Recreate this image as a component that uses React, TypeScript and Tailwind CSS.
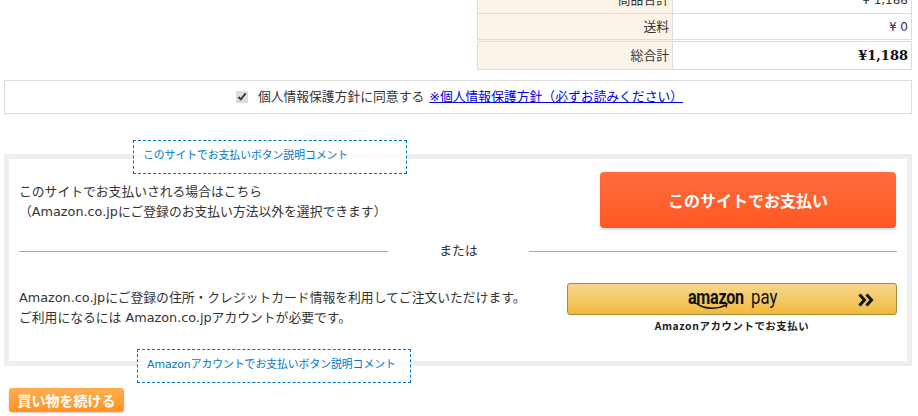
const jp = "font-['DejaVu_Sans','Noto_Sans_CJK_JP',sans-serif]";
const cell = "border border-[#dddddd]";
const price = "font-['DejaVu_Sans',sans-serif] text-[12px] pr-[3px] text-right";

function AmazonPayLogo() {
  return (
    <span className="relative -mt-[3px] flex items-baseline font-['Roboto',sans-serif] text-[21px] leading-none text-[#111]">
      <span className="w-[57px] origin-left scale-x-[0.77] font-bold tracking-[-0.4px]">amazon</span>
      <span className="ml-[6px] w-[26px] origin-left scale-x-[0.8] font-normal">pay</span>
      <svg className="absolute left-[8px] top-[15px]" width="33" height="9" viewBox="0 0 40 10" fill="none">
        <path d="M1 1.5C9 7.5 24 9.5 36 3.5" stroke="#111" strokeWidth="2" strokeLinecap="round" />
        <path d="M32 1.5L37.5 1.5L36.5 6.5" stroke="#111" strokeWidth="1.6" />
      </svg>
    </span>
  );
}

function Comment({ children, className }: { children: React.ReactNode; className: string }) {
  return (
    <div className={`absolute h-[34px] w-[274px] border border-dashed border-[#0073bd] bg-white/75 flex items-center pb-[1px] pl-[9px] text-[10.8px] whitespace-nowrap text-[#0078c8] ${className}`}>
      {children}
    </div>
  );
}

export default function App() {
  return (
    <div className={`relative h-[416px] w-[918px] overflow-hidden bg-white text-[12.8px] text-[#333] ${jp}`}>
      <div className="flex justify-end pr-[6px]">
        <table className="-mt-[14px] w-[435px] border-collapse text-[12.8px]">
          <tbody>
            <tr className="h-[27px]">
              <th className={`w-[195px] ${cell} bg-[#fdf4e9] pr-[3px] text-right font-normal`}>商品合計</th>
              <td className={`${cell} ${price}`}>¥ 1,188</td>
            </tr>
            <tr className="h-[27px]">
              <th className={`${cell} bg-[#fdf4e9] pr-[3px] text-right font-normal`}>送料</th>
              <td className={`${cell} ${price}`}>¥ 0</td>
            </tr>
            <tr className="h-[29px]">
              <th className={`${cell} border-t-[3px] border-t-[#dddddd] border-double bg-[#fdf4e9] pr-[3px] text-right font-normal`}>総合計</th>
              <td className={`${cell} border-t-[3px] border-t-[#dddddd] border-double pr-[3px] text-right text-[13px] font-bold font-['DejaVu_Serif',serif] text-[#111]`}>¥1,188</td>
            </tr>
          </tbody>
        </table>
      </div>

      <div className="ml-[4px] mt-[10px] flex h-[34px] w-[908px] items-center justify-center border border-[#dddddd] pl-[3px]">
        <input type="checkbox" defaultChecked className="mr-[10px] h-[12px] w-[12px] accent-[#dcdcdc]" />
        <span>個人情報保護方針に同意する</span>
        <a href="#" className="ml-[5px] text-[#0000ee] underline">※個人情報保護方針（必ずお読みください）</a>
      </div>

      <div className="ml-[4px] mt-[40px] h-[212px] w-[908px] border-[5px] border-[#eeeeee] px-[10px]">
        <div className="flex h-[83px] items-start justify-between">
          <p className="mt-[23px] leading-[20px]">
            このサイトでお支払いされる場合はこちら
            <br />
            （Amazon.co.jpにご登録のお支払い方法以外を選択できます）
          </p>
          <button className="mr-[1px] mt-[13px] flex h-[56px] w-[296px] items-center justify-center rounded-[4px] bg-gradient-to-b from-[#ff6c3c] to-[#ff5722] font-['Noto_Sans_CJK_JP',sans-serif] text-[16px] font-bold text-white shadow-[0_2px_2px_#ddd]">
            このサイトでお支払い
          </button>
        </div>

        <div className="flex h-[18px] items-center">
          <div className="h-px flex-1 bg-[#aaaaaa]" />
          <span className="w-[141px] text-center">または</span>
          <div className="h-px w-[368px] bg-[#aaaaaa]" />
        </div>

        <div className="flex items-start justify-between">
          <p className="mt-[28px] leading-[20px]">
            Amazon.co.jpにご登録の住所・クレジットカード情報を利用してご注文いただけます。
            <br />
            ご利用になるには Amazon.co.jpアカウントが必要です。
          </p>
          <div className="mt-[23px] w-[330px]">
            <button className="relative flex h-[32px] w-full items-center justify-center rounded-[3px] border border-[#a98a3a] bg-gradient-to-b from-[#f7d88c] to-[#f0ba36]">
              <AmazonPayLogo />
              <svg className="absolute right-[22px] top-[9px]" width="16" height="14" viewBox="0 0 16 14" fill="none">
                <path d="M1.5 1.5L6.5 7L1.5 12.5M8.5 1.5L13.5 7L8.5 12.5" stroke="#111" strokeWidth="3" />
              </svg>
            </button>
            <p className="mt-[3px] text-center font-['Noto_Sans_CJK_JP',sans-serif] text-[10.4px] font-bold tracking-[0.6px] text-[#222]">Amazonアカウントでお支払い</p>
          </div>
        </div>
      </div>

      <Comment className="left-[133px] top-[140px]">このサイトでお支払いボタン説明コメント</Comment>
      <Comment className="left-[137px] top-[349px]">Amazonアカウントでお支払いボタン説明コメント</Comment>

      <button className="ml-[9px] mt-[22px] flex h-[24px] w-[115px] items-center justify-center rounded-[3px] bg-gradient-to-b from-[#ffae4f] to-[#ff9320] font-['Noto_Sans_CJK_JP',sans-serif] text-[14px] font-bold text-white shadow-[0_1px_2px_#ccc]">
        買い物を続ける
      </button>
    </div>
  );
}
